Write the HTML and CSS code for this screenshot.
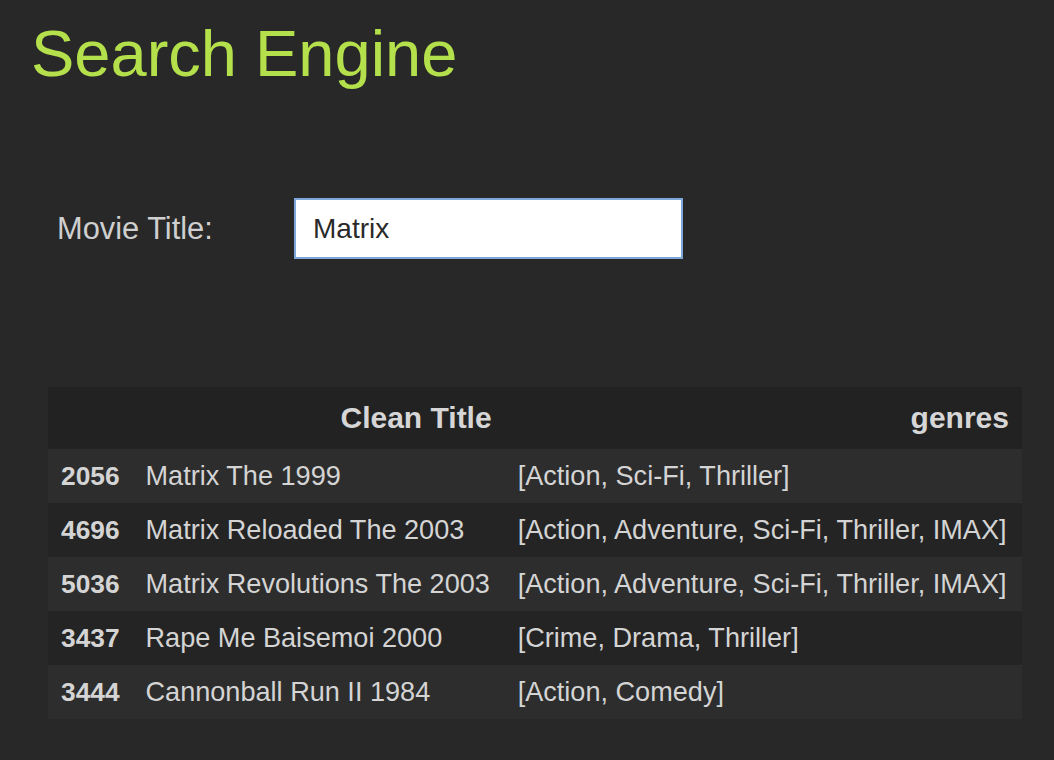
FILE: index.html
```html
<!DOCTYPE html>
<html>
<head>
<meta charset="utf-8">
<link rel="stylesheet" href="styles.css">
</head>
<body>
<h1 class="title">Search Engine</h1>
<div class="search-row">
  <label class="label" for="q">Movie Title:</label>
  <input class="input" id="q" type="text" value="Matrix">
</div>
<table class="results">
  <thead>
    <tr><th></th><th>Clean Title</th><th>genres</th></tr>
  </thead>
  <tbody>
    <tr><th>2056</th><td>Matrix The 1999</td><td>[Action, Sci-Fi, Thriller]</td></tr>
    <tr><th>4696</th><td>Matrix Reloaded The 2003</td><td>[Action, Adventure, Sci-Fi, Thriller, IMAX]</td></tr>
    <tr><th>5036</th><td>Matrix Revolutions The 2003</td><td>[Action, Adventure, Sci-Fi, Thriller, IMAX]</td></tr>
    <tr><th>3437</th><td>Rape Me Baisemoi 2000</td><td>[Crime, Drama, Thriller]</td></tr>
    <tr><th>3444</th><td>Cannonball Run II 1984</td><td>[Action, Comedy]</td></tr>
  </tbody>
</table>
</body>
</html>
```
FILE: styles.css
```css
html, body {
  margin: 0;
  padding: 0;
  background: #282828;
  font-family: "Liberation Sans", Arial, sans-serif;
  color: #d4d4d4;
}
body {
  padding: 0 32px 0 31px;
}
.title {
  margin: 0;
  padding-top: 16px;
  font-size: 65px;
  line-height: 75px;
  font-weight: normal;
  color: #b4e04b;
}
.search-row {
  display: flex;
  align-items: center;
  margin-top: 107px;
  padding-left: 26px;
}
.label {
  width: 237px;
  font-size: 30.8px;
  color: #cfcfcf;
}
.input {
  box-sizing: border-box;
  width: 389px;
  height: 61px;
  margin: 0;
  padding: 0 17px;
  border: 2px solid #7ba7da;
  background: #ffffff;
  font-family: "Liberation Sans", Arial, sans-serif;
  font-size: 28px;
  color: #2a2a2a;
  outline: none;
}
.results {
  margin-top: 128px;
  margin-left: 17px;
  width: 974px;
  border-collapse: collapse;
  font-size: 27.1px;
}
.results th, .results td {
  padding: 0 13px;
  white-space: nowrap;
}
.results thead tr {
  background: #222222;
  height: 62px;
}
.results thead th {
  text-align: right;
  font-weight: bold;
  font-size: 30px;
  color: #d6d6d6;
}
.results tbody tr {
  height: 54px;
}
.results tbody tr:nth-child(odd) {
  background: #2d2d2d;
}
.results tbody tr:nth-child(even) {
  background: #242424;
}
.results tbody th {
  text-align: left;
  font-weight: bold;
  font-size: 26.3px;
  width: 57px;
}
.results tbody td {
  text-align: left;
}
```
